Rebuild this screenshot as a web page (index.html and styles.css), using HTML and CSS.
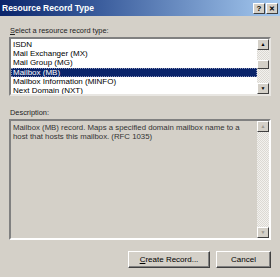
FILE: index.html
```html
<!DOCTYPE html>
<html>
<head>
  <title>Resource Record Type</title>
  <link rel="stylesheet" href="styles.css">
</head>
<body>
  <div class="dialog">
    <div class="titlebar">
      <span class="title">Resource Record Type</span>
      <div class="tb-buttons">
        <span class="tb-btn">?</span>
        <span class="tb-btn close">&#x2715;</span>
      </div>
    </div>

    <div class="content">
      <div class="label"><u>S</u>elect a resource record type:</div>
      <div class="listbox">
        <ul class="items">
          <li>ISDN</li>
          <li>Mail Exchanger (MX)</li>
          <li>Mail Group (MG)</li>
          <li class="selected">Mailbox (MB)</li>
          <li>Mailbox Information (MINFO)</li>
          <li>Next Domain (NXT)</li>
        </ul>
        <div class="scrollbar">
          <span class="sb-btn">&#9650;</span>
          <div class="sb-track">
            <span class="sb-thumb"></span>
          </div>
          <span class="sb-btn">&#9660;</span>
        </div>
      </div>

      <div class="label desc-label">Description:</div>
      <div class="desc">
        <p class="desc-text">Mailbox (MB) record. Maps a specified domain mailbox name to a host that hosts this mailbox. (RFC 1035)</p>
        <div class="scrollbar disabled">
          <span class="sb-btn">&#9650;</span>
          <div class="sb-track"></div>
          <span class="sb-btn">&#9660;</span>
        </div>
      </div>

      <div class="buttons">
        <button class="btn create"><u>C</u>reate Record...</button>
        <button class="btn cancel">Cancel</button>
      </div>
    </div>
  </div>
</body>
</html>
```

FILE: styles.css
```css
body {
  margin: 0;
  background: #d4d0c8;
  font-family: "Liberation Sans", Arial, sans-serif;
  font-size: 8px;
  color: #000;
}
.dialog {
  width: 280px;
  height: 277px;
  overflow: hidden;
}
.titlebar {
  height: 16px;
  display: flex;
  align-items: center;
  justify-content: space-between;
  background: linear-gradient(to right, #0a246a, #3a5c9c 35%, #a6caf0);
  padding: 0 2px 0 2px;
}
.title {
  color: #fff;
  font-weight: bold;
  font-size: 8.5px;
}
.tb-buttons {
  display: flex;
  gap: 1px;
}
.tb-btn {
  width: 10px;
  height: 9px;
  background: #d4d0c8;
  border: 1px solid;
  border-color: #fff #404040 #404040 #fff;
  font-size: 8px;
  font-weight: bold;
  line-height: 9px;
  text-align: center;
}
.tb-btn.close {
  font-size: 7px;
}
.content {
  padding: 0 9px 0 9px;
}
.label {
  margin-top: 8px;
  height: 13px;
  line-height: 13px;
  padding-left: 1px;
  font-size: 7.4px;
  color: #222;
}
.listbox {
  display: flex;
  height: 55px;
  background: #fff;
  border: 2px solid;
  border-color: #808080 #e8e6e2 #e8e6e2 #808080;
}
.items {
  flex: 1;
  list-style: none;
  margin: 0;
  padding: 1px 0 0 0;
  overflow: hidden;
}
.items li {
  height: 9.2px;
  line-height: 9.2px;
  padding-left: 2px;
}
.items li.selected {
  background: #0a246a;
  color: #fff;
  outline: 1px dotted #8a93b8;
  outline-offset: -1px;
}
.scrollbar {
  width: 12px;
  display: flex;
  flex-direction: column;
  background: repeating-conic-gradient(#f2f1ee 0 25%, #dcd9d3 0 50%) 0 0 / 2px 2px;
}
.sb-btn {
  height: 9px;
  background: #d4d0c8;
  border: 1px solid;
  border-color: #fff #404040 #404040 #fff;
  font-size: 5px;
  line-height: 9px;
  text-align: center;
}
.sb-track {
  flex: 1;
  padding-top: 10px;
}
.sb-thumb {
  display: block;
  height: 7px;
  background: #d4d0c8;
  border: 1px solid;
  border-color: #fff #404040 #404040 #fff;
}
.scrollbar.disabled .sb-btn {
  color: #9a978f;
}
.desc-label {
  margin-top: 10px;
}
.desc {
  display: flex;
  height: 117px;
  border: 2px solid;
  border-color: #808080 #fff #fff #808080;
}
.desc-text {
  flex: 1;
  margin: 0;
  padding: 2px 2px 0 2px;
  line-height: 9px;
  font-size: 7.8px;
  color: #333;
}
.buttons {
  display: flex;
  justify-content: flex-end;
  gap: 6px;
  margin-top: 11px;
}
.btn {
  height: 17px;
  background: #d4d0c8;
  border: 1px solid;
  border-color: #fff #404040 #404040 #fff;
  box-shadow: inset -1px -1px 0 #808080;
  font-family: "Liberation Sans", Arial, sans-serif;
  font-size: 8px;
  color: #000;
  padding: 0;
}
.btn.create {
  width: 82px;
}
.btn.cancel {
  width: 55px;
}
```
